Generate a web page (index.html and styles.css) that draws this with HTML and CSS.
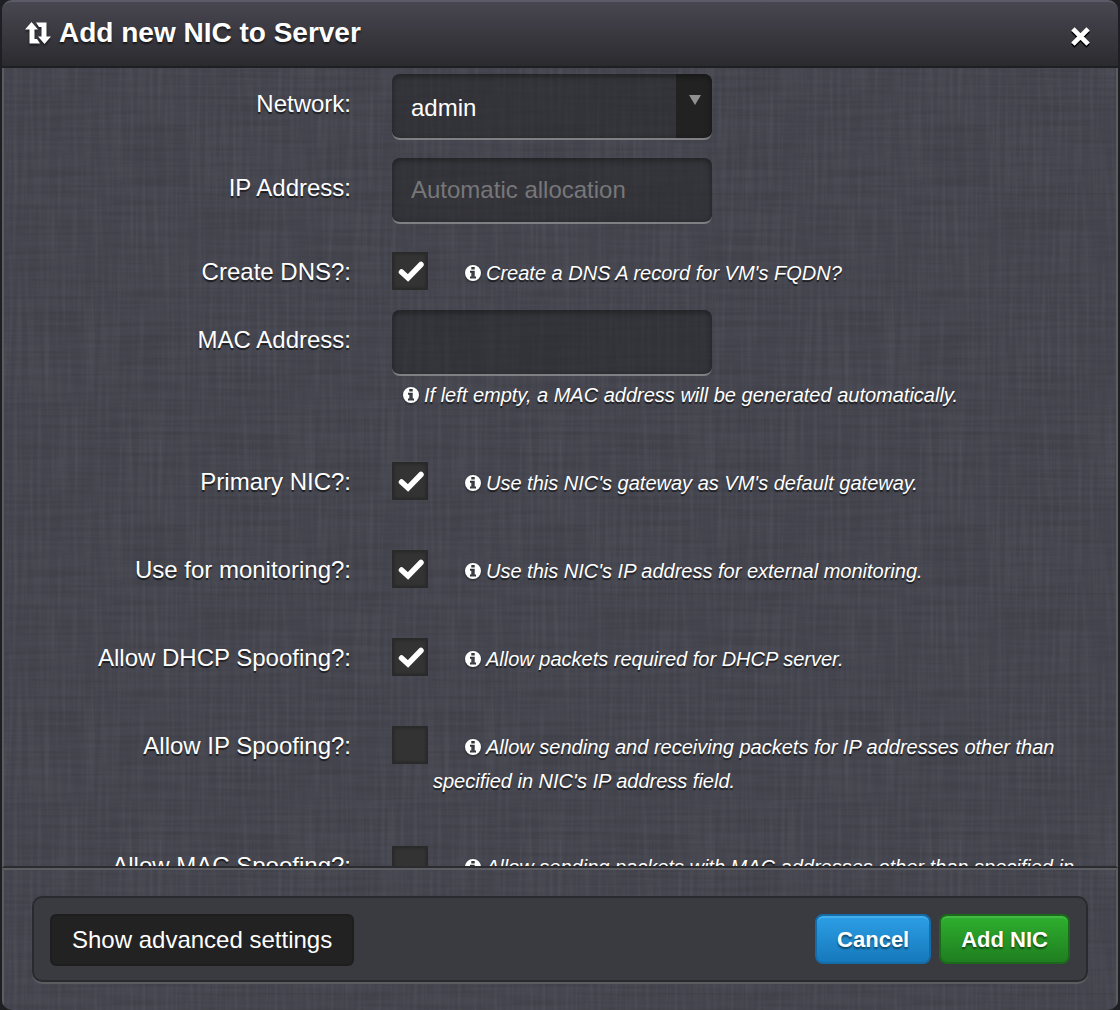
FILE: index.html
```html
<!DOCTYPE html>
<html lang="en">
<head>
<meta charset="utf-8">
<meta name="viewport" content="width=device-width, initial-scale=1">
<title>Add new NIC to Server</title>
<link rel="stylesheet" href="styles.css">
</head>
<body>
<svg class="sprite" aria-hidden="true">
  <symbol id="info" viewBox="0 0 16 16">
    <path fill="currentColor" fill-rule="evenodd" d="M8 0a8 8 0 1 1 0 16A8 8 0 0 1 8 0zM6.300 2v2.600h3.400V2zM5 5.800v1.900h1.300v3.700H5v2h6v-2H9.700V5.800z"/>
  </symbol>
</svg>
<form class="modal">
  <header class="modal-header">
    <h1 class="title">
      <svg class="title-icon" viewBox="0 0 26 22" aria-hidden="true"><path fill="currentColor" d="M0 7.500 6.500 0 13 7.500H9.500V17H12l3 4.500H4.500v-14zM26 14.500 19.500 22 13 14.500h3.500V5H14L11 .5h10.500v14z"/></svg>
      Add new NIC to Server
    </h1>
    <button type="button" class="close" aria-label="Close">
      <svg class="close-icon" viewBox="0 0 20 20" aria-hidden="true"><path fill="none" stroke="currentColor" stroke-width="5" d="M2 2 18 18M18 2 2 18"/></svg>
    </button>
  </header>

  <div class="modal-body">
    <div class="row">
      <label class="label" for="network">Network:</label>
      <div class="control"><select class="field select" id="network"><option>admin</option></select></div>
    </div>
    <div class="row">
      <label class="label" for="ip">IP Address:</label>
      <div class="control"><input class="field" type="text" id="ip" placeholder="Automatic allocation"></div>
    </div>
    <div class="row row-check row-compact">
      <label class="label" for="dns">Create DNS?:</label>
      <div class="control control-check">
        <input class="check" type="checkbox" id="dns" checked>
        <p class="hint"><svg class="info"><use href="#info"/></svg>Create a DNS A record for VM's FQDN?</p>
      </div>
    </div>
    <div class="row row-mac">
      <label class="label" for="mac">MAC Address:</label>
      <div class="control">
        <input class="field" type="text" id="mac">
        <p class="hint hint-below"><svg class="info"><use href="#info"/></svg>If left empty, a MAC address will be generated automatically.</p>
      </div>
    </div>
    <div class="row row-check">
      <label class="label" for="primary">Primary NIC?:</label>
      <div class="control control-check">
        <input class="check" type="checkbox" id="primary" checked>
        <p class="hint"><svg class="info"><use href="#info"/></svg>Use this NIC's gateway as VM's default gateway.</p>
      </div>
    </div>
    <div class="row row-check">
      <label class="label" for="monitoring">Use for monitoring?:</label>
      <div class="control control-check">
        <input class="check" type="checkbox" id="monitoring" checked>
        <p class="hint"><svg class="info"><use href="#info"/></svg>Use this NIC's IP address for external monitoring.</p>
      </div>
    </div>
    <div class="row row-check">
      <label class="label" for="dhcp">Allow DHCP Spoofing?:</label>
      <div class="control control-check">
        <input class="check" type="checkbox" id="dhcp" checked>
        <p class="hint"><svg class="info"><use href="#info"/></svg>Allow packets required for DHCP server.</p>
      </div>
    </div>
    <div class="row row-check">
      <label class="label" for="ipspoof">Allow IP Spoofing?:</label>
      <div class="control control-check">
        <input class="check" type="checkbox" id="ipspoof">
        <p class="hint"><svg class="info"><use href="#info"/></svg>Allow sending and receiving packets for IP addresses other than specified in NIC's IP address field.</p>
      </div>
    </div>
    <div class="row row-check">
      <label class="label" for="macspoof">Allow MAC Spoofing?:</label>
      <div class="control control-check">
        <input class="check" type="checkbox" id="macspoof">
        <p class="hint"><svg class="info"><use href="#info"/></svg>Allow sending packets with MAC addresses other than specified in</p>
      </div>
    </div>
  </div>

  <footer class="modal-footer">
    <div class="actions">
      <button type="button" class="btn btn-dark">Show advanced settings</button>
      <div class="actions-main">
        <button type="button" class="btn btn-blue">Cancel</button>
        <button type="submit" class="btn btn-green">Add NIC</button>
      </div>
    </div>
  </footer>
</form>
</body>
</html>
```
FILE: styles.css
```css
* {
  box-sizing: border-box;
}

body {
  margin: 0;
  background: #1e1f22;
  color: #fff;
  font-family: "Liberation Sans", Arial, Helvetica, sans-serif;
  font-size: 24px;
}

.sprite {
  display: none;
}

.modal {
  display: flex;
  flex-direction: column;
  height: 100vh;
  margin: 0 2px;
  overflow: hidden;
  border-radius: 10px;
  background-color: #45464f;
  /* woven linen: one noise layer stretched vertically, one horizontally */
  background-image:
    url("data:image/svg+xml,%3Csvg xmlns='http://www.w3.org/2000/svg' width='400' height='400'%3E%3Cfilter id='a' x='0' y='0' width='100%25' height='100%25' color-interpolation-filters='sRGB'%3E%3CfeTurbulence type='fractalNoise' baseFrequency='.25 .01' numOctaves='2' seed='4' stitchTiles='stitch'/%3E%3CfeColorMatrix values='0 0 0 0 1 0 0 0 0 1 0 0 0 0 1 .1 0 0 0 -.04'/%3E%3C/filter%3E%3Crect width='400' height='400' filter='url(%23a)'/%3E%3C/svg%3E"),
    url("data:image/svg+xml,%3Csvg xmlns='http://www.w3.org/2000/svg' width='400' height='400'%3E%3Cfilter id='a' x='0' y='0' width='100%25' height='100%25' color-interpolation-filters='sRGB'%3E%3CfeTurbulence type='fractalNoise' baseFrequency='.01 .25' numOctaves='2' seed='9' stitchTiles='stitch'/%3E%3CfeColorMatrix values='0 0 0 0 0 0 0 0 0 0 0 0 0 0 0 .18 0 0 0 -.06'/%3E%3C/filter%3E%3Crect width='400' height='400' filter='url(%23a)'/%3E%3C/svg%3E");
}

.modal-header {
  display: flex;
  flex: none;
  align-items: center;
  justify-content: space-between;
  height: 68px;
  padding: 0 28px 0 23px;
  border-top: 2px solid #5b5a66;
  border-bottom: 2px solid #1e1f23;
  border-radius: 10px 10px 0 0;
  background: linear-gradient(#484650, #2b2b2f);
}

.title {
  display: flex;
  gap: 8px;
  align-items: center;
  margin: 0;
  padding-bottom: 2px;
  font-size: 28px;
  line-height: 32px;
  text-shadow: 0 2px 2px rgba(0, 0, 0, .6);
}

.title-icon {
  width: 26px;
  height: 22px;
  filter: drop-shadow(0 2px 1px rgba(0, 0, 0, .5));
}

.close {
  display: flex;
  padding: 4px 0 0;
  border: 0;
  background: none;
  color: #fff;
}

.close-icon {
  width: 19px;
  height: 19px;
  filter: drop-shadow(0 2px 0 #000);
}

.modal-body {
  flex: 1;
  min-height: 0;
  padding: 6px 26px 0 0;
  overflow-y: auto;
  scrollbar-width: none;
  border: solid #5b5c62;
  border-width: 0 2px;
  border-bottom: 2px solid #2c2c30;
}

.row {
  display: grid;
  grid-template-columns: 347px 1fr;
  column-gap: 41px;
  padding-bottom: 18px;
}

.label {
  line-height: 60px;
  text-align: right;
  text-shadow: 0 2px 1px rgba(0, 0, 0, .6);
}

.field {
  display: block;
  width: 320px;
  height: 66px;
  margin: 0;
  padding: 0 19px;
  border: 0;
  border-bottom: 2px solid #808084;
  border-radius: 8px;
  outline: 0;
  background: rgba(34, 34, 36, .5);
  box-shadow: inset 0 2px 6px rgba(0, 0, 0, .4);
  color: #fff;
  font: inherit;
}

.field::placeholder {
  color: #77777a;
}

.select {
  appearance: none;
  padding-top: 4px;
  padding-bottom: 2px;
  background:
    url("data:image/svg+xml,%3Csvg xmlns='http://www.w3.org/2000/svg' width='12' height='10'%3E%3Cpath fill='%23909090' d='M0 0h12L6 10z'/%3E%3C/svg%3E") right 11px top 21px no-repeat,
    linear-gradient(#222, #222) right / 36px 100% no-repeat,
    rgba(34, 34, 36, .5);
}

.row-check {
  min-height: 88px;
  padding-bottom: 38px;
}

.row-compact {
  min-height: 68px;
  padding-bottom: 18px;
}

.row-check .label {
  height: 48px;
}

.row-mac {
  padding-bottom: 40px;
}

.control-check {
  display: grid;
  grid-template-columns: 36px 1fr;
  column-gap: 5px;
  align-items: start;
}

.check {
  appearance: none;
  width: 36px;
  height: 38px;
  margin: 10px 0 0;
  border: 2px solid #2a2a2b;
  background: #333;
  box-shadow: inset 0 0 3px #262626;
}

.check:checked {
  background: #333 url("data:image/svg+xml,%3Csvg xmlns='http://www.w3.org/2000/svg' width='32' height='34'%3E%3Cpath fill='none' stroke='%23fff' stroke-width='5.500' stroke-linecap='round' d='M7.500 18l6.500 6L27 10.500'/%3E%3C/svg%3E") center / 32px 34px no-repeat;
}

.hint {
  margin: 0;
  padding-top: 14px;
  font-size: 20px;
  font-style: italic;
  line-height: 34px;
  text-indent: 32px;
  text-shadow: 0 2px 1px rgba(0, 0, 0, .6);
}

.hint-below {
  padding: 2px 0 0 11px;
  text-indent: 0;
}

.info {
  width: 16px;
  height: 16px;
  margin-right: 5px;
  vertical-align: -1px;
  filter: drop-shadow(0 1px 1px rgba(0, 0, 0, .5));
}

.modal-footer {
  flex: none;
  padding: 26px 28px 28px;
  border: 2px solid #5b5c62;
  border-bottom: 0;
}

.actions {
  display: flex;
  flex-wrap: wrap;
  gap: 8px;
  align-items: flex-start;
  justify-content: space-between;
  padding: 16px 16px 14px;
  border: 2px solid #2a2a2e;
  border-radius: 10px;
  background: #3a3b40;
  box-shadow: 0 2px 0 #5b5c60;
}

.actions-main {
  display: flex;
  gap: 8px;
}

.btn {
  height: 50px;
  padding: 2px 20px 0;
  border: 2px solid;
  border-radius: 8px;
  color: #fff;
  font: bold 22px "Liberation Sans", Arial, Helvetica, sans-serif;
  text-shadow: 0 2px 2px rgba(0, 0, 0, .5);
}

.btn-dark {
  height: 52px;
  padding-top: 0;
  border-color: #1e1e1e;
  border-radius: 6px;
  background: #222;
  font-size: 24px;
  font-weight: normal;
  text-shadow: none;
}

.btn-blue {
  border-color: #146ca8;
  background: linear-gradient(#2d9fe6, #1679bb);
  box-shadow: inset 0 2px 0 #44adec;
}

.btn-green {
  border-color: #1b6a1b;
  background: linear-gradient(#2eb02e, #1f7e20);
  box-shadow: inset 0 2px 0 #45b945;
}
```
